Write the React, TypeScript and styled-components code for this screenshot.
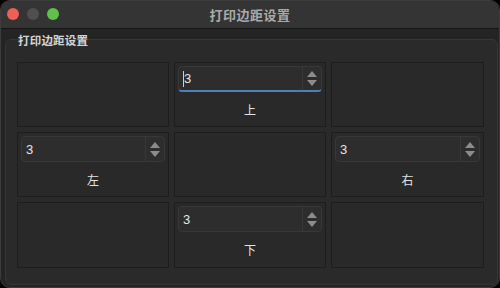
import React from "react";
import styled, { createGlobalStyle } from "styled-components";

const Global = createGlobalStyle`
  html, body { margin: 0; padding: 0; background: #000; }
  body { width: 500px; height: 288px; overflow: hidden; font-family: "Noto Sans CJK SC", "Liberation Sans", sans-serif; }
`;

const Window = styled.div`
  width: 500px;
  height: 288px;
  box-sizing: border-box;
  border-radius: 10px;
  overflow: hidden;
  background: #242424;
  display: flex;
  flex-direction: column;
  border: 1px solid #3c3c3c;
`;

const TitleBar = styled.div`
  height: 27px;
  flex: none;
  background: #343434;
  border-bottom: 1px solid #161616;
  position: relative;
  display: flex;
  align-items: center;
  justify-content: center;
`;

const Lights = styled.div`
  position: absolute;
  left: 6px;
  top: 7px;
  display: flex;
  gap: 8px;
`;

const Light = styled.span<{ $c: string }>`
  width: 12px;
  height: 12px;
  border-radius: 50%;
  background: ${(p) => p.$c};
`;

const Title = styled.div`
  font-size: 13px;
  font-weight: 700;
  color: #a9a9a9;
  letter-spacing: 0.5px;
`;

const Body = styled.div`
  flex: 1;
  padding: 10px 2px 2px 4px;
  display: flex;
`;

const Group = styled.div`
  flex: 1;
  position: relative;
  background: #2a2a2a;
  border: 1px solid #363636;
  border-radius: 6px;
  padding: 22px 13px 16px 11px;
  display: flex;
`;

const GroupTitle = styled.div`
  position: absolute;
  left: 12px;
  top: -7px;
  font-size: 11.5px;
  font-weight: 700;
  color: #d4d4d4;
  line-height: 14px;
  letter-spacing: 0.2px;
`;

const Grid = styled.div`
  flex: 1;
  display: grid;
  grid-template-columns: 152px 152px 153px;
  grid-template-rows: 65px 65px 66px;
  column-gap: 5px;
  row-gap: 5px;
`;

const Cell = styled.div`
  box-sizing: border-box;
  border: 1px solid #1d1d1d;
  background: #292929;
  display: flex;
  flex-direction: column;
  padding: 3px 3px 0 3px;
`;

const Spin = styled.div<{ $focus?: boolean }>`
  height: 26px;
  box-sizing: border-box;
  border: 1px solid #383838;
  border-radius: 4px;
  background: #2d2d2d;
  display: flex;
  position: relative;
  ${(p) => (p.$focus ? "border-bottom: 2px solid #4f7fb8;" : "")}
`;

const SpinText = styled.div`
  flex: 1;
  display: flex;
  align-items: center;
  padding-left: 4px;
  font-family: "Liberation Sans", sans-serif;
  font-size: 13px;
  color: #e6e6e6;
`;

const Caret = styled.span`
  width: 1px;
  height: 16px;
  background: #cfcfcf;
`;

const SpinButtons = styled.div`
  width: 18px;
  border-left: 1px solid #383838;
  display: flex;
  flex-direction: column;
  align-items: center;
  justify-content: center;
  gap: 3px;
`;

const Label = styled.div`
  flex: 1;
  display: flex;
  align-items: center;
  justify-content: center;
  font-size: 12px;
  color: #e2e2e2;
`;

const Arrow = ({ up }: { up?: boolean }) => (
  <svg width="10" height="6" viewBox="0 0 10 6">
    <path d={up ? "M5 0 L10 6 L0 6 Z" : "M0 0 L10 0 L5 6 Z"} fill="#8c8c8c" />
  </svg>
);

const SpinBox = ({ focus }: { focus?: boolean }) => (
  <Spin $focus={focus}>
    <SpinText>
      {focus && <Caret />}3
    </SpinText>
    <SpinButtons>
      <Arrow up />
      <Arrow />
    </SpinButtons>
  </Spin>
);

const FieldCell = ({ label, focus }: { label: string; focus?: boolean }) => (
  <Cell>
    <SpinBox focus={focus} />
    <Label>{label}</Label>
  </Cell>
);

export default function App() {
  return (
    <>
      <Global />
      <Window>
        <TitleBar>
          <Lights>
            <Light $c="#ed5f57" />
            <Light $c="#4f4f4f" />
            <Light $c="#5fc04a" />
          </Lights>
          <Title>打印边距设置</Title>
        </TitleBar>
        <Body>
          <Group>
            <GroupTitle>打印边距设置</GroupTitle>
            <Grid>
              <Cell />
              <FieldCell label="上" focus />
              <Cell />
              <FieldCell label="左" />
              <Cell />
              <FieldCell label="右" />
              <Cell />
              <FieldCell label="下" />
              <Cell />
            </Grid>
          </Group>
        </Body>
      </Window>
    </>
  );
}
